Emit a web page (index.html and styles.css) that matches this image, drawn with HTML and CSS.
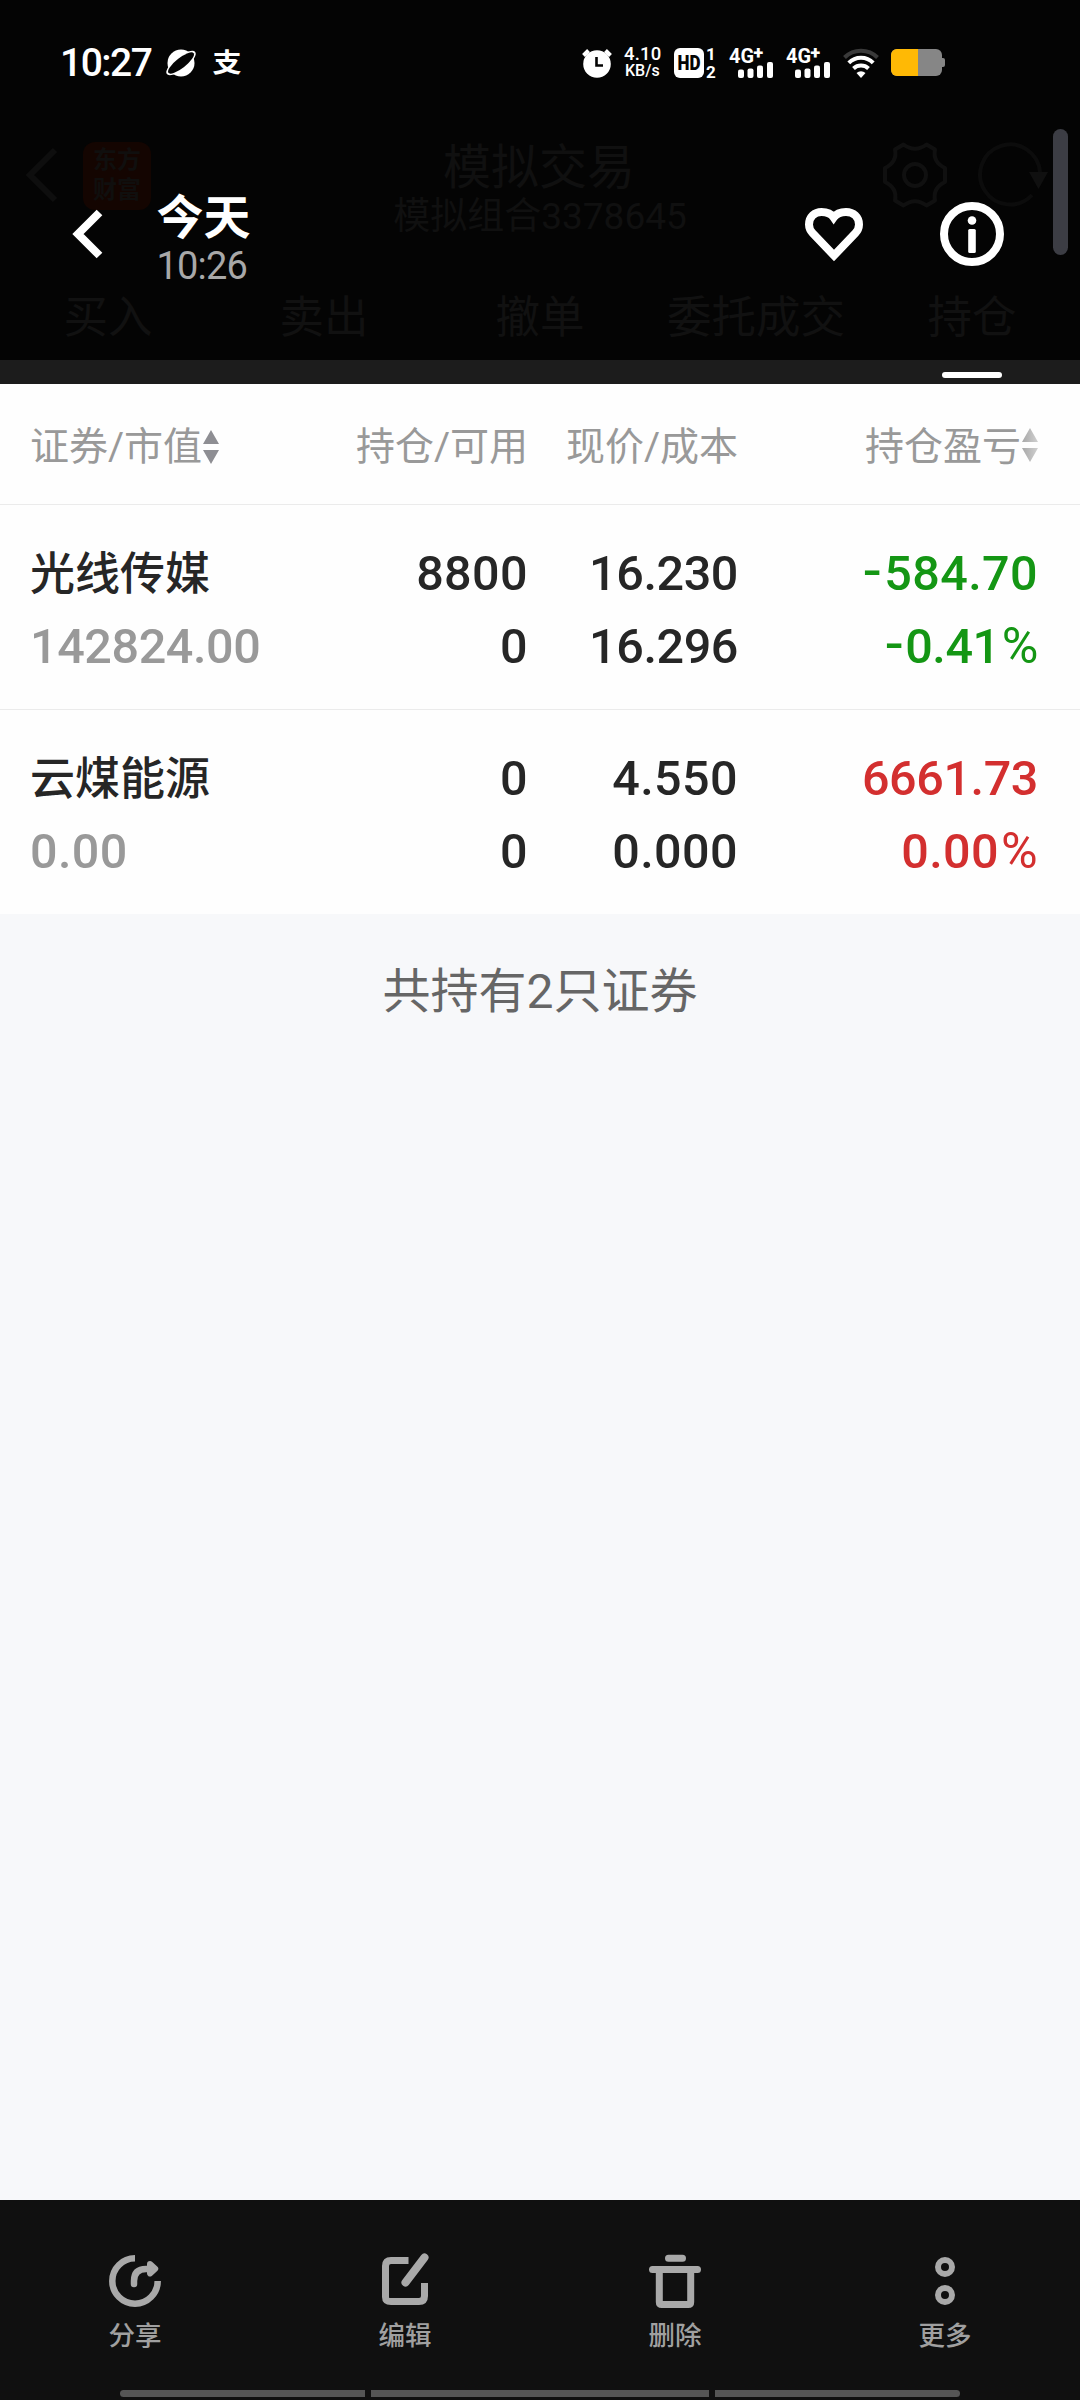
FILE: index.html
```html
<!DOCTYPE html>
<html lang="zh-CN">
<head>
    <meta charset="UTF-8">
    <meta name="viewport" content="width=device-width, initial-scale=1.0">
    <title>模拟交易 - 持仓</title>
    <link rel="stylesheet" href="styles.css">
</head>
<body>
    <div class="screen">
        <header class="top">
            <!-- 状态栏 -->
            <div class="status-bar">
                <div class="status-left">
                    <span class="clock">10:27</span>
                    <svg class="icon-planet" width="30" height="28" viewBox="0 0 30 28">
                        <circle cx="15" cy="14" r="13.5" fill="#fff"/>
                        <ellipse cx="15" cy="14" rx="18" ry="6.4" transform="rotate(-38 15 14)" fill="#fff"/>
                        <ellipse cx="15" cy="14" rx="16" ry="5" transform="rotate(-38 15 14)" fill="#040404"/>
                    </svg>
                    <span class="pay">支</span>
                </div>
                <div class="status-right">
                    <svg width="30" height="30" viewBox="0 0 30 30">
                        <circle cx="15" cy="16" r="13.8" fill="#fff"/>
                        <path d="M1.5 7.5l5-5M28.5 7.5l-5-5" stroke="#fff" stroke-width="4"/>
                        <path d="M14.5 9v8.5h6.500" fill="none" stroke="#040404" stroke-width="2.6"/>
                    </svg>
                    <div class="speed">
                        <span class="speed-num">4.10</span>
                        <span class="speed-unit">KB/s</span>
                    </div>
                    <svg class="icon-hd" width="43" height="30" viewBox="0 0 43 30">
                        <rect width="30" height="30" rx="6" fill="#fff"/>
                        <text class="hd-text" x="3.5" y="22" textLength="23" lengthAdjust="spacingAndGlyphs">HD</text>
                        <text class="sim-text" x="32" y="12">1</text>
                        <text class="sim-text" x="32" y="29.5">2</text>
                    </svg>
                    <svg class="icon-signal" width="45" height="30" viewBox="0 0 45 30">
                        <text class="net-text" x="0" y="15" textLength="25" lengthAdjust="spacingAndGlyphs">4G</text>
                        <text class="plus-text" x="24.5" y="11">+</text>
                        <rect x="9" y="21.5" width="6" height="8.5" rx="2"/>
                        <rect x="18.5" y="20.5" width="6" height="9.5" rx="2"/>
                        <rect x="28" y="17.5" width="6" height="12.5" rx="2"/>
                        <rect x="38" y="14" width="6" height="16" rx="2"/>
                    </svg>
                    <svg class="icon-signal" width="45" height="30" viewBox="0 0 45 30">
                        <text class="net-text" x="0" y="15" textLength="25" lengthAdjust="spacingAndGlyphs">4G</text>
                        <text class="plus-text" x="24.5" y="11">+</text>
                        <rect x="9" y="21.5" width="6" height="8.5" rx="2"/>
                        <rect x="18.5" y="20.5" width="6" height="9.5" rx="2"/>
                        <rect x="28" y="17.5" width="6" height="12.5" rx="2"/>
                        <rect x="38" y="14" width="6" height="16" rx="2"/>
                    </svg>
                    <svg class="icon-wifi" width="36" height="30" viewBox="0 0 36 30" fill="none" stroke="#fff" stroke-width="4">
                        <path d="M1.5 9.500a23.5 23.5 0 0 1 33 0" stroke="#3a3a3a"/>
                        <path d="M5.8 14.800a17 17 0 0 1 24.4 0"/>
                        <path d="M10.5 20.500a11 11 0 0 1 15 0"/>
                        <path d="M18 30l-4.500-5a7 7 0 0 1 9 0z" fill="#fff" stroke="none"/>
                    </svg>
                    <svg class="icon-battery" width="54" height="27" viewBox="0 0 54 27">
                        <rect width="51" height="27" rx="6" fill="#868686"/>
                        <path d="M50 9h2a2 2 0 0 1 2 2v5a2 2 0 0 1-2 2h-2z" fill="#868686"/>
                        <path d="M6 0h21v27H6a6 6 0 0 1-6-6V6a6 6 0 0 1 6-6z" fill="#ffb905"/>
                    </svg>
                </div>
            </div>

            <!-- 被遮罩的应用标题栏 -->
            <div class="app-bar">
                <svg class="app-back" width="32" height="54" viewBox="0 0 32 54">
                    <path d="M29 2L4 27l25 25" fill="none" stroke="#0e0e0e" stroke-width="6"/>
                </svg>
                <div class="app-logo">东方<br>财富</div>
                <div class="app-title">
                    <div class="title">模拟交易</div>
                    <div class="subtitle">模拟组合3378645</div>
                </div>
                <svg class="app-gear" width="66" height="66" viewBox="0 0 66 66" fill="none" stroke="#101010" stroke-width="4">
                    <circle cx="33" cy="33" r="11"/>
                    <path d="M21.5 2.5Q33 11 44.5 2.5L53 7.5Q50.500 20 63 26v14Q50.500 46 53 58.5L44.5 63.5Q33 55 21.5 63.5L13 58.5Q15.500 46 3 40V26Q15.500 20 13 7.5z" stroke-linejoin="round"/>
                </svg>
                <svg class="app-refresh" width="72" height="66" viewBox="0 0 72 66">
                    <path d="M54 53A30 30 0 1 1 62 30" fill="none" stroke="#0c0c0c" stroke-width="4"/>
                    <path d="M51 30h19l-9.500 17z" fill="#101010"/>
                </svg>
            </div>
            <nav class="app-tabs">
                <span>买入</span>
                <span>卖出</span>
                <span>撤单</span>
                <span>委托成交</span>
                <span>持仓</span>
            </nav>

            <!-- 相册浮层 -->
            <div class="viewer-bar">
                <svg class="viewer-back" width="32" height="50" viewBox="0 0 32 50">
                    <path d="M27.500 3.500L6 25l21.500 21.500" fill="none" stroke="#fff" stroke-width="8"/>
                </svg>
                <div class="viewer-date">
                    <div class="day">今天</div>
                    <div class="time">10:26</div>
                </div>
                <svg class="viewer-heart" width="60" height="56" viewBox="0 0 60 56">
                    <path d="M30 49.500L8.500 27A12.700 12.700 0 0 1 5 18.500C5 11 10.500 6 17.500 6C23 6 27 7.500 29.700 11.500C32.500 7.500 37 6 42 6C49.500 6 55 11 55 18.500A12.700 12.700 0 0 1 51.500 27z" fill="none" stroke="#fff" stroke-width="8"/>
                </svg>
                <svg class="viewer-info" width="64" height="64" viewBox="0 0 64 64">
                    <circle cx="32" cy="32" r="28" fill="none" stroke="#fff" stroke-width="8"/>
                    <circle cx="32" cy="18.500" r="4.300" fill="#fff"/>
                    <rect x="28.200" y="27" width="7.600" height="24" rx="1.500" fill="#fff"/>
                </svg>
            </div>
            <div class="scroll-thumb"></div>
        </header>
        <div class="tab-strip"><span class="tab-line"></span></div>

        <!-- 持仓列表 -->
        <main class="content">
            <div class="row head">
                <div class="col-name">证券/市值<svg class="sort" width="16" height="34" viewBox="0 0 16 34"><path d="M8 0l8 14H0zM0 20h16L8 34z" fill="#8e8e93"/></svg></div>
                <div class="col-hold">持仓/可用</div>
                <div class="col-price">现价/成本</div>
                <div class="col-profit">持仓盈亏<svg class="sort sort-light" width="16" height="34" viewBox="0 0 16 34">
                    <defs>
                        <linearGradient id="fade" x1="0" x2="1"><stop offset="0" stop-color="#a8a8a8"/><stop offset="1" stop-color="#d0d0d0"/></linearGradient>
                    </defs>
                    <path d="M8 0l8 14H0zM0 20h16L8 34z" fill="url(#fade)"/></svg></div>
            </div>
            <div class="row stock">
                <div class="col-name"><div class="name">光线传媒</div><div class="muted tight">142824.00</div></div>
                <div class="col-hold"><div>8800</div><div>0</div></div>
                <div class="col-price tight"><div>16.230</div><div>16.296</div></div>
                <div class="col-profit down"><div><span class="minus">-</span>584.70</div><div class="tight"><span class="minus">-</span>0.41<span class="pct">%</span></div></div>
            </div>
            <div class="row stock">
                <div class="col-name"><div class="name">云煤能源</div><div class="muted">0.00</div></div>
                <div class="col-hold"><div>0</div><div>0</div></div>
                <div class="col-price"><div>4.550</div><div>0.000</div></div>
                <div class="col-profit up"><div class="tight">6661.73</div><div>0.00<span class="pct">%</span></div></div>
            </div>
            <p class="summary">共持有2只证券</p>
        </main>

        <!-- 底部操作栏 -->
        <footer class="bottom">
            <div class="actions">
                <div class="action">
                    <svg width="56" height="56" viewBox="0 0 56 56" fill="none" stroke="#a9a9a9" stroke-width="6.5">
                        <path d="M28 5.300A22.700 22.700 0 1 0 50.700 28"/>
                        <path d="M27 31v-3q0-12 12-12h3" stroke-linecap="round"/>
                        <path d="M43 11l5.200 4.700-5.200 4.700z" fill="#a9a9a9" stroke-width="6" stroke-linejoin="round"/>
                    </svg>
                    <span>分享</span>
                </div>
                <div class="action">
                    <svg width="56" height="56" viewBox="0 0 56 56" fill="none" stroke="#a9a9a9" stroke-width="7">
                        <path d="M31.500 7.500H14Q8.500 7.500 8.500 13v31Q8.500 48.500 14 48.500h28Q47.500 48.500 47.500 43V30"/>
                        <path d="M28.500 29.500L47.500 4.500" stroke-width="8" stroke-linecap="round"/>
                    </svg>
                    <span>编辑</span>
                </div>
                <div class="action">
                    <svg width="56" height="56" viewBox="0 0 56 56" fill="none" stroke="#a9a9a9" stroke-width="7">
                        <path d="M21.500 5.200h14M5.500 16.500h45" stroke-linecap="round"/>
                        <path d="M12.300 17v32q0 2.500 2.500 2.500h26.400q2.500 0 2.500-2.500V17"/>
                    </svg>
                    <span>删除</span>
                </div>
                <div class="action">
                    <svg width="56" height="56" viewBox="0 0 56 56" fill="none" stroke="#a9a9a9" stroke-width="6">
                        <circle cx="28" cy="14" r="7"/>
                        <circle cx="28" cy="42" r="7"/>
                    </svg>
                    <span>更多</span>
                </div>
            </div>
            <div class="gesture">
                <span class="side left"></span>
                <span class="middle"></span>
                <span class="side right"></span>
            </div>
        </footer>
    </div>
</body>
</html>
```
FILE: styles.css
```css
* {
    box-sizing: border-box;
}
body {
    margin: 0;
    background-color: #040404;
    font-family: Roboto, "Noto Sans CJK SC", sans-serif;
}
svg {
    display: block;
    flex: none;
    overflow: visible;
}
.screen {
    display: flex;
    flex-direction: column;
    width: 1080px;
    height: 2400px;
}

/* 顶部 */
.top {
    position: relative;
    height: 360px;
    background-color: #040404;
}
.status-bar {
    display: flex;
    justify-content: space-between;
    height: 124px;
    padding: 0 135px 0 60px;
    color: #fff;
}
.status-left,
.status-right {
    display: flex;
    align-items: center;
    height: 125px;
}
.clock {
    width: 106px;
    font-size: 39px;
    font-weight: 500;
    letter-spacing: -1.5px;
}
.pay {
    margin-left: 18px;
    font-size: 26px;
    font-weight: 700;
    line-height: 30px;
    transform: scaleX(1.12);
}
.speed {
    display: flex;
    flex-direction: column;
    width: 38px;
    margin: 0 12px;
}
.speed-num {
    font-size: 18.5px;
    font-weight: 500;
    line-height: 16px;
    letter-spacing: 0.2px;
}
.speed-unit {
    padding-left: 1px;
    font-size: 16px;
    font-weight: 500;
    line-height: 17px;
}
.hd-text {
    font-size: 20px;
    font-weight: 900;
    fill: #040404;
}
.sim-text {
    font-size: 17px;
    font-weight: 700;
    fill: #fff;
}
.net-text {
    font-size: 20.5px;
    font-weight: 700;
    fill: #fff;
}
.plus-text {
    font-size: 18px;
    font-weight: 900;
    fill: #fff;
}
.icon-signal {
    margin-left: 12px;
    fill: #fff;
}
.icon-wifi,
.icon-battery {
    margin-left: 12px;
}
.app-bar {
    display: flex;
    align-items: flex-start;
    height: 163px;
    padding: 18px 30px 0 26px;
}
.app-back {
    margin-top: 6px;
}
.app-logo {
    width: 68px;
    height: 68px;
    margin-left: 25px;
    padding-top: 3px;
    border-radius: 12px;
    background-color: #140501;
    color: #100f0e;
    font-size: 24px;
    font-weight: 700;
    line-height: 30px;
    text-align: center;
}
.app-title {
    flex: 1;
    padding-left: 47px;
    color: #101010;
    text-align: center;
}
.title {
    padding-right: 2px;
    font-size: 48px;
    line-height: 51px;
}
.subtitle {
    font-size: 37px;
    line-height: 48px;
    white-space: nowrap;
}
.app-refresh {
    margin-left: 30px;
}
.app-tabs {
    display: flex;
    color: #111;
    font-size: 44.5px;
    line-height: 62px;
}
.app-tabs span {
    flex: 1;
    text-align: center;
}
.viewer-bar {
    position: absolute;
    top: 184px;
    left: 0;
    display: flex;
    align-items: center;
    width: 1080px;
    height: 100px;
    padding: 0 76px 0 71.5px;
}
.viewer-date {
    flex: 1;
    margin-left: 53px;
    padding-top: 11px;
}
.day {
    color: #fff;
    font-size: 47px;
    font-weight: 700;
    line-height: 52px;
}
.time {
    color: #a8a8a8;
    font-size: 38px;
    letter-spacing: -0.8px;
    line-height: 44px;
}
.viewer-info {
    margin-left: 76px;
}
.scroll-thumb {
    position: absolute;
    top: 129px;
    left: 1053px;
    width: 15px;
    height: 126px;
    border-radius: 8px;
    background-color: #3c3d44;
}
.tab-strip {
    display: flex;
    justify-content: flex-end;
    height: 24px;
    padding: 12px 78px 0 0;
    background-color: #1c1c1c;
}
.tab-line {
    width: 60px;
    height: 6px;
    border-radius: 3px;
    background-color: #fff;
}

/* 列表 */
.content {
    flex: 1;
    background-color: #f7f8fa;
}
.row {
    display: grid;
    grid-template-columns: 301px 197px 210px 300px;
    padding-left: 30px;
    background-color: #fefefe;
}
.head {
    align-items: center;
    height: 121px;
    padding-top: 5px;
    border-bottom: 1px solid #ebebeb;
    color: #999;
    font-size: 39px;
    line-height: 60px;
}
.head div {
    display: flex;
    align-items: center;
}
.head .col-hold,
.head .col-price,
.head .col-profit {
    justify-content: flex-end;
}
.sort {
    margin-left: 1px;
}
.sort-light {
    position: relative;
    top: -2px;
}
.stock {
    height: 205px;
    padding-top: 32px;
    border-bottom: 1px solid #ebebeb;
    color: #262626;
    font-size: 48.5px;
    font-weight: 500;
    letter-spacing: 0.4px;
    line-height: 73px;
}
.stock + .stock {
    height: 204px;
    border-bottom: none;
}
.col-hold,
.col-price,
.col-profit {
    text-align: right;
}
.name {
    height: 73px;
    padding-top: 1px;
    font-size: 45px;
    letter-spacing: 0;
}
.muted {
    color: #999;
}
.tight {
    letter-spacing: -0.4px;
}
.down {
    color: #149614;
}
.up {
    color: #d32f2f;
}
.minus {
    display: inline-block;
    margin-right: 3px;
    transform: translateY(-3px) scaleX(1.15);
}
.pct {
    margin-left: 2px;
    font-size: 50px;
    font-weight: 400;
    line-height: 1;
}
.summary {
    margin: 0;
    padding-top: 43px;
    color: #666;
    font-size: 48px;
    line-height: 70px;
    text-align: center;
}

/* 底部 */
.bottom {
    height: 200px;
    background-color: #101010;
}
.actions {
    display: flex;
    height: 190px;
    padding-top: 53px;
}
.action {
    flex: 1;
    display: flex;
    flex-direction: column;
    align-items: center;
    color: #a0a0a0;
    font-size: 26.5px;
    font-weight: 500;
    line-height: 54px;
}
.gesture {
    display: flex;
    gap: 6px;
    height: 7px;
    padding: 0 120px;
}
.side {
    width: 245px;
    background-color: #555;
}
.left {
    border-radius: 4px 0 0 4px;
}
.right {
    border-radius: 0 4px 4px 0;
}
.middle {
    flex: 1;
    background-color: #555;
}
```
